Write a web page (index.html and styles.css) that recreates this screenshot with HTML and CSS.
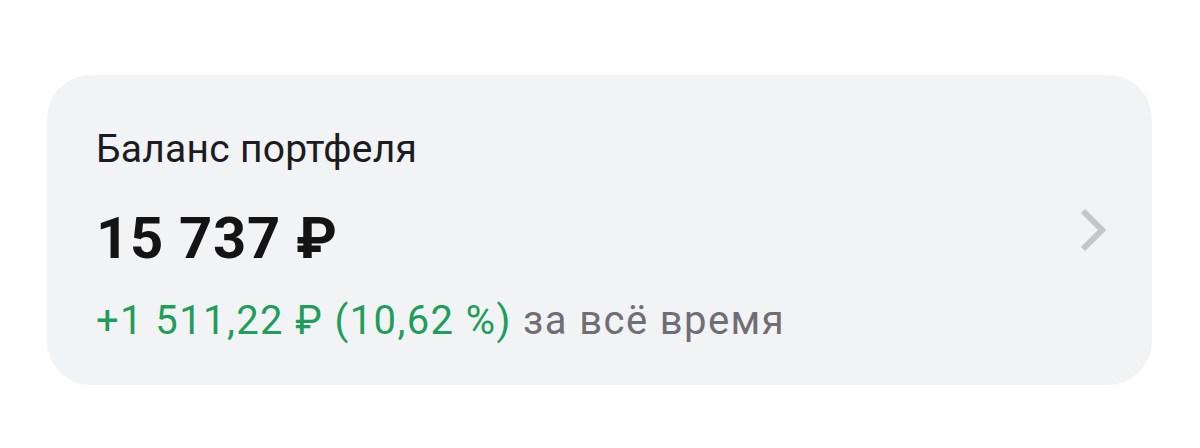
FILE: index.html
```html
<!DOCTYPE html>
<html lang="ru">
<head>
  <meta charset="UTF-8">
  <meta name="viewport" content="width=device-width, initial-scale=1.0">
  <title>Баланс портфеля</title>
  <link rel="stylesheet" href="styles.css">
</head>
<body>
  <div class="card">
    <div class="info">
      <p class="title">Баланс портфеля</p>
      <p class="amount">15 737 ₽</p>
      <p class="change"><span class="profit">+1 511,22 ₽ (10,62 %)</span> за всё время</p>
    </div>
    <svg class="chevron" width="26" height="44" viewBox="0 0 26 44">
      <path d="M3 3 L22 22 L3 41" fill="none" stroke="#c4c5c8" stroke-width="6" />
    </svg>
  </div>
</body>
</html>
```

FILE: styles.css
```css
body {
  font-family: Roboto, "Noto Sans", sans-serif;
  margin: 0;
  padding: 75px 0 0 47px;
  background-color: #fff;
}

.card {
  width: 1105px;
  height: 310px;
  box-sizing: border-box;
  padding: 50px 46px 0 49px;
  background-color: #f2f3f5;
  border-radius: 44px;
  display: flex;
  justify-content: space-between;
}

.info p {
  margin: 0;
  white-space: nowrap;
}

.title {
  font-size: 39px;
  line-height: 48px;
  letter-spacing: 0.25px;
  color: #1c1c1e;
}

.amount {
  font-size: 58px;
  font-weight: bold;
  line-height: 68px;
  letter-spacing: 0.7px;
  color: #141414;
  margin-top: 31px !important;
}

.change {
  font-size: 40px;
  line-height: 48px;
  letter-spacing: 1.4px;
  color: #6e6e73;
  margin-top: 25px !important;
}

.profit {
  color: #1f9d5a;
}

.chevron {
  display: block;
  align-self: center;
  margin-top: -50px;
}
```
